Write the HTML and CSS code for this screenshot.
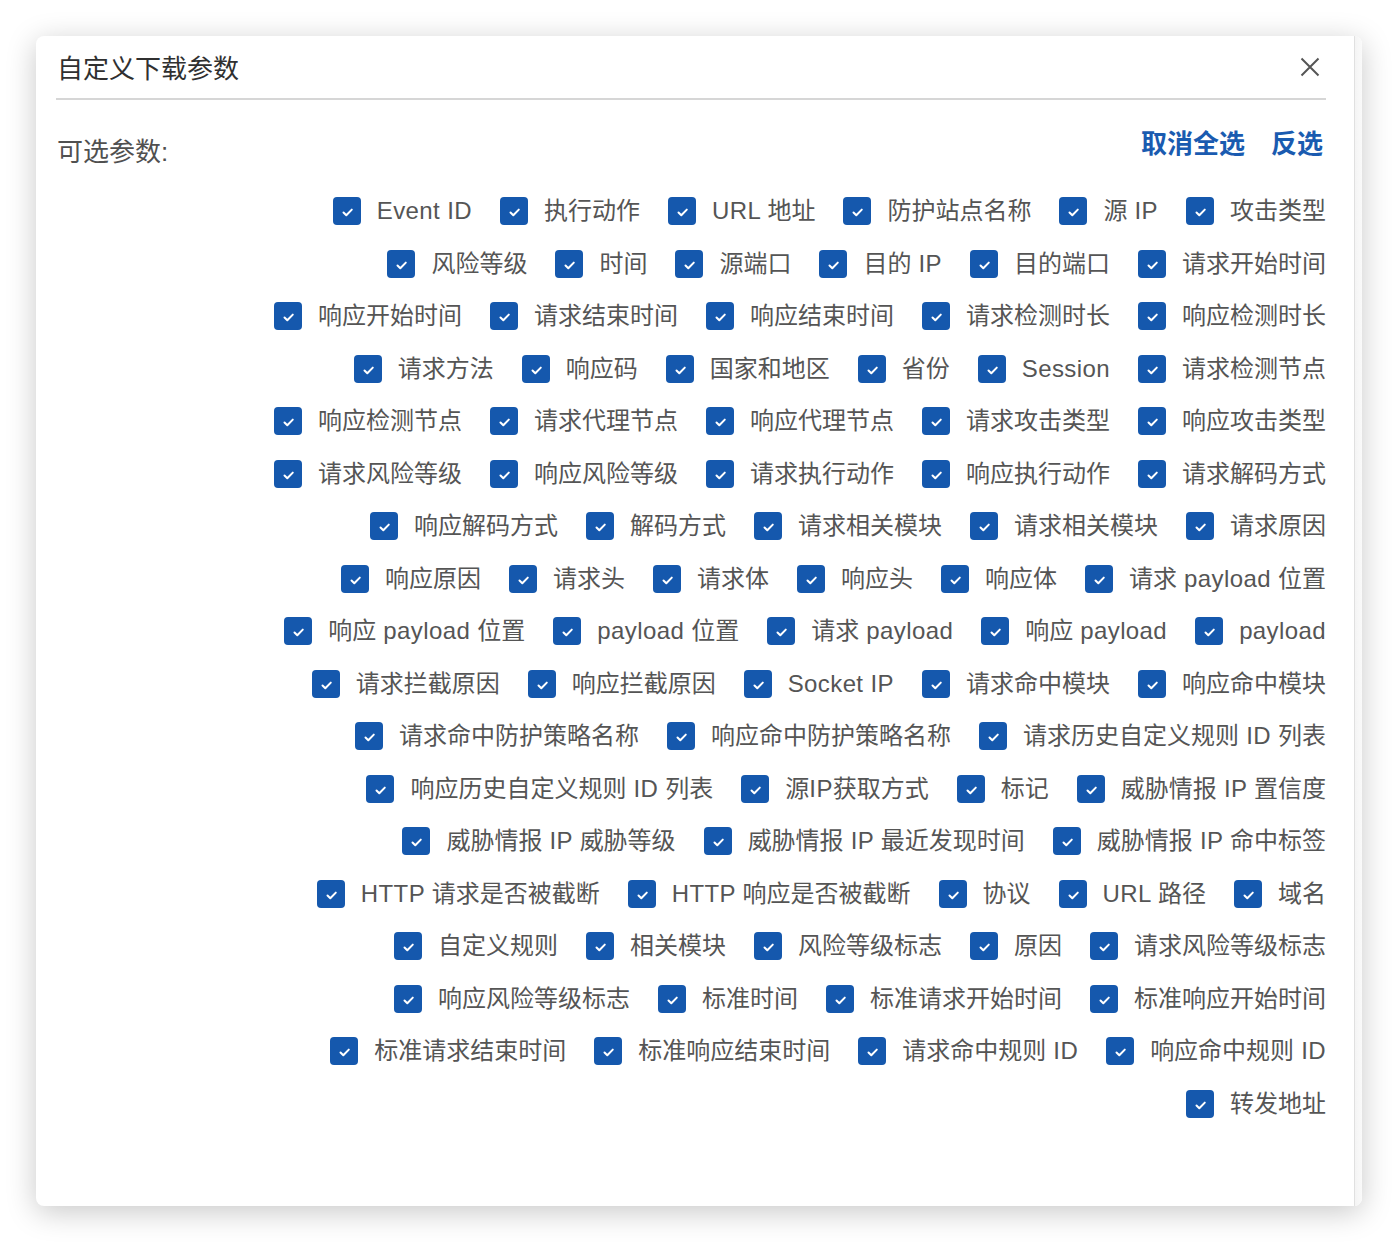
FILE: index.html
```html
<!DOCTYPE html>
<html lang="zh-CN">
<head>
<meta charset="utf-8">
<title>自定义下载参数</title>
<link rel="stylesheet" href="styles.css">
</head>
<body>
<div class="modal">
  <div class="content">
    <div class="header">
      <div class="title">自定义下载参数</div>
      <svg class="close" width="20" height="20" viewBox="0 0 20 20"><path d="M1.5 1.5 L18.5 18.5 M18.5 1.5 L1.5 18.5" stroke="#555" stroke-width="2" fill="none"/></svg>
    </div>
    <div class="toolbar">
      <div class="label">可选参数:</div>
      <div class="links"><a class="link">取消全选</a><a class="link">反选</a></div>
    </div>
    <div class="options">
      <div class="row">
        <label class="opt"><span class="box"></span><span class="txt"><span class="en">Event ID</span></span></label>
        <label class="opt"><span class="box"></span><span class="txt">执行动作</span></label>
        <label class="opt"><span class="box"></span><span class="txt"><span class="en">URL </span>地址</span></label>
        <label class="opt"><span class="box"></span><span class="txt">防护站点名称</span></label>
        <label class="opt"><span class="box"></span><span class="txt">源<span class="en"> IP</span></span></label>
        <label class="opt"><span class="box"></span><span class="txt">攻击类型</span></label>
      </div>
      <div class="row">
        <label class="opt"><span class="box"></span><span class="txt">风险等级</span></label>
        <label class="opt"><span class="box"></span><span class="txt">时间</span></label>
        <label class="opt"><span class="box"></span><span class="txt">源端口</span></label>
        <label class="opt"><span class="box"></span><span class="txt">目的<span class="en"> IP</span></span></label>
        <label class="opt"><span class="box"></span><span class="txt">目的端口</span></label>
        <label class="opt"><span class="box"></span><span class="txt">请求开始时间</span></label>
      </div>
      <div class="row">
        <label class="opt"><span class="box"></span><span class="txt">响应开始时间</span></label>
        <label class="opt"><span class="box"></span><span class="txt">请求结束时间</span></label>
        <label class="opt"><span class="box"></span><span class="txt">响应结束时间</span></label>
        <label class="opt"><span class="box"></span><span class="txt">请求检测时长</span></label>
        <label class="opt"><span class="box"></span><span class="txt">响应检测时长</span></label>
      </div>
      <div class="row">
        <label class="opt"><span class="box"></span><span class="txt">请求方法</span></label>
        <label class="opt"><span class="box"></span><span class="txt">响应码</span></label>
        <label class="opt"><span class="box"></span><span class="txt">国家和地区</span></label>
        <label class="opt"><span class="box"></span><span class="txt">省份</span></label>
        <label class="opt"><span class="box"></span><span class="txt"><span class="en">Session</span></span></label>
        <label class="opt"><span class="box"></span><span class="txt">请求检测节点</span></label>
      </div>
      <div class="row">
        <label class="opt"><span class="box"></span><span class="txt">响应检测节点</span></label>
        <label class="opt"><span class="box"></span><span class="txt">请求代理节点</span></label>
        <label class="opt"><span class="box"></span><span class="txt">响应代理节点</span></label>
        <label class="opt"><span class="box"></span><span class="txt">请求攻击类型</span></label>
        <label class="opt"><span class="box"></span><span class="txt">响应攻击类型</span></label>
      </div>
      <div class="row">
        <label class="opt"><span class="box"></span><span class="txt">请求风险等级</span></label>
        <label class="opt"><span class="box"></span><span class="txt">响应风险等级</span></label>
        <label class="opt"><span class="box"></span><span class="txt">请求执行动作</span></label>
        <label class="opt"><span class="box"></span><span class="txt">响应执行动作</span></label>
        <label class="opt"><span class="box"></span><span class="txt">请求解码方式</span></label>
      </div>
      <div class="row">
        <label class="opt"><span class="box"></span><span class="txt">响应解码方式</span></label>
        <label class="opt"><span class="box"></span><span class="txt">解码方式</span></label>
        <label class="opt"><span class="box"></span><span class="txt">请求相关模块</span></label>
        <label class="opt"><span class="box"></span><span class="txt">请求相关模块</span></label>
        <label class="opt"><span class="box"></span><span class="txt">请求原因</span></label>
      </div>
      <div class="row">
        <label class="opt"><span class="box"></span><span class="txt">响应原因</span></label>
        <label class="opt"><span class="box"></span><span class="txt">请求头</span></label>
        <label class="opt"><span class="box"></span><span class="txt">请求体</span></label>
        <label class="opt"><span class="box"></span><span class="txt">响应头</span></label>
        <label class="opt"><span class="box"></span><span class="txt">响应体</span></label>
        <label class="opt"><span class="box"></span><span class="txt">请求<span class="en"> payload </span>位置</span></label>
      </div>
      <div class="row">
        <label class="opt"><span class="box"></span><span class="txt">响应<span class="en"> payload </span>位置</span></label>
        <label class="opt"><span class="box"></span><span class="txt"><span class="en">payload </span>位置</span></label>
        <label class="opt"><span class="box"></span><span class="txt">请求<span class="en"> payload</span></span></label>
        <label class="opt"><span class="box"></span><span class="txt">响应<span class="en"> payload</span></span></label>
        <label class="opt"><span class="box"></span><span class="txt"><span class="en">payload</span></span></label>
      </div>
      <div class="row">
        <label class="opt"><span class="box"></span><span class="txt">请求拦截原因</span></label>
        <label class="opt"><span class="box"></span><span class="txt">响应拦截原因</span></label>
        <label class="opt"><span class="box"></span><span class="txt"><span class="en">Socket IP</span></span></label>
        <label class="opt"><span class="box"></span><span class="txt">请求命中模块</span></label>
        <label class="opt"><span class="box"></span><span class="txt">响应命中模块</span></label>
      </div>
      <div class="row">
        <label class="opt"><span class="box"></span><span class="txt">请求命中防护策略名称</span></label>
        <label class="opt"><span class="box"></span><span class="txt">响应命中防护策略名称</span></label>
        <label class="opt"><span class="box"></span><span class="txt">请求历史自定义规则<span class="en"> ID </span>列表</span></label>
      </div>
      <div class="row">
        <label class="opt"><span class="box"></span><span class="txt">响应历史自定义规则<span class="en"> ID </span>列表</span></label>
        <label class="opt"><span class="box"></span><span class="txt">源<span class="en">IP</span>获取方式</span></label>
        <label class="opt"><span class="box"></span><span class="txt">标记</span></label>
        <label class="opt"><span class="box"></span><span class="txt">威胁情报<span class="en"> IP </span>置信度</span></label>
      </div>
      <div class="row">
        <label class="opt"><span class="box"></span><span class="txt">威胁情报<span class="en"> IP </span>威胁等级</span></label>
        <label class="opt"><span class="box"></span><span class="txt">威胁情报<span class="en"> IP </span>最近发现时间</span></label>
        <label class="opt"><span class="box"></span><span class="txt">威胁情报<span class="en"> IP </span>命中标签</span></label>
      </div>
      <div class="row">
        <label class="opt"><span class="box"></span><span class="txt"><span class="en">HTTP </span>请求是否被截断</span></label>
        <label class="opt"><span class="box"></span><span class="txt"><span class="en">HTTP </span>响应是否被截断</span></label>
        <label class="opt"><span class="box"></span><span class="txt">协议</span></label>
        <label class="opt"><span class="box"></span><span class="txt"><span class="en">URL </span>路径</span></label>
        <label class="opt"><span class="box"></span><span class="txt">域名</span></label>
      </div>
      <div class="row">
        <label class="opt"><span class="box"></span><span class="txt">自定义规则</span></label>
        <label class="opt"><span class="box"></span><span class="txt">相关模块</span></label>
        <label class="opt"><span class="box"></span><span class="txt">风险等级标志</span></label>
        <label class="opt"><span class="box"></span><span class="txt">原因</span></label>
        <label class="opt"><span class="box"></span><span class="txt">请求风险等级标志</span></label>
      </div>
      <div class="row">
        <label class="opt"><span class="box"></span><span class="txt">响应风险等级标志</span></label>
        <label class="opt"><span class="box"></span><span class="txt">标准时间</span></label>
        <label class="opt"><span class="box"></span><span class="txt">标准请求开始时间</span></label>
        <label class="opt"><span class="box"></span><span class="txt">标准响应开始时间</span></label>
      </div>
      <div class="row">
        <label class="opt"><span class="box"></span><span class="txt">标准请求结束时间</span></label>
        <label class="opt"><span class="box"></span><span class="txt">标准响应结束时间</span></label>
        <label class="opt"><span class="box"></span><span class="txt">请求命中规则<span class="en"> ID</span></span></label>
        <label class="opt"><span class="box"></span><span class="txt">响应命中规则<span class="en"> ID</span></span></label>
      </div>
      <div class="row">
        <label class="opt"><span class="box"></span><span class="txt">转发地址</span></label>
      </div>
    </div>
  </div>
  <div class="scrollbar"></div>
</div>
</body>
</html>
```
FILE: styles.css
```css
html, body {
  margin: 0;
  padding: 0;
  background: #ffffff;
}
body {
  font-family: "Liberation Sans", "Noto Sans CJK SC", sans-serif;
  width: 1398px;
  height: 1242px;
  overflow: hidden;
}
.modal {
  margin: 36px 0 0 36px;
  width: 1326px;
  height: 1170px;
  background: #ffffff;
  border-radius: 8px;
  box-shadow: 0 6px 30px rgba(0, 0, 0, 0.22);
  display: flex;
  overflow: hidden;
}
.content {
  flex: 1;
  padding: 0 28px 0 20px;
}
.scrollbar {
  width: 7px;
  border-left: 1px solid #e0e0e0;
  background: linear-gradient(to right, #f4f4f4, #fafafa);
}
.header {
  height: 62px;
  border-bottom: 2px solid #d6d6d6;
  display: flex;
  align-items: center;
  justify-content: space-between;
}
.title {
  font-size: 26px;
  line-height: 32px;
  color: #303030;
  margin: 3px 0 0 1px;
}
.close {
  display: block;
  margin-right: 6px;
}
.toolbar {
  height: 85px;
  display: flex;
  justify-content: space-between;
  align-items: flex-start;
}
.label {
  margin-top: 34px;
  font-size: 26px;
  line-height: 36px;
  color: #505050;
  margin-left: 1px;
}
.links {
  margin-top: 26px;
  margin-right: 3px;
  display: flex;
  gap: 26px;
}
.link {
  font-size: 26px;
  line-height: 36px;
  font-weight: bold;
  color: #1a5bb0;
  cursor: pointer;
}
.row {
  height: 52.5px;
  display: flex;
  justify-content: flex-end;
  align-items: center;
}
.opt {
  display: flex;
  align-items: center;
  margin-left: 28px;
}
.box {
  width: 28px;
  height: 28px;
  border-radius: 4px;
  background-color: #1558ad;
  background-image: url("data:image/svg+xml;utf8,<svg xmlns='http://www.w3.org/2000/svg' width='28' height='28' viewBox='0 0 28 28'><path d='M10.5 15.5 L13.3 18.3 L18.8 12.6' stroke='white' stroke-width='2' fill='none' stroke-linecap='round' stroke-linejoin='round'/></svg>");
  background-repeat: no-repeat;
}
.txt {
  margin-left: 16px;
  font-size: 24px;
  line-height: 32px;
  color: #555555;
  white-space: nowrap;
}
.en {
  letter-spacing: 0.4px;
}
```
